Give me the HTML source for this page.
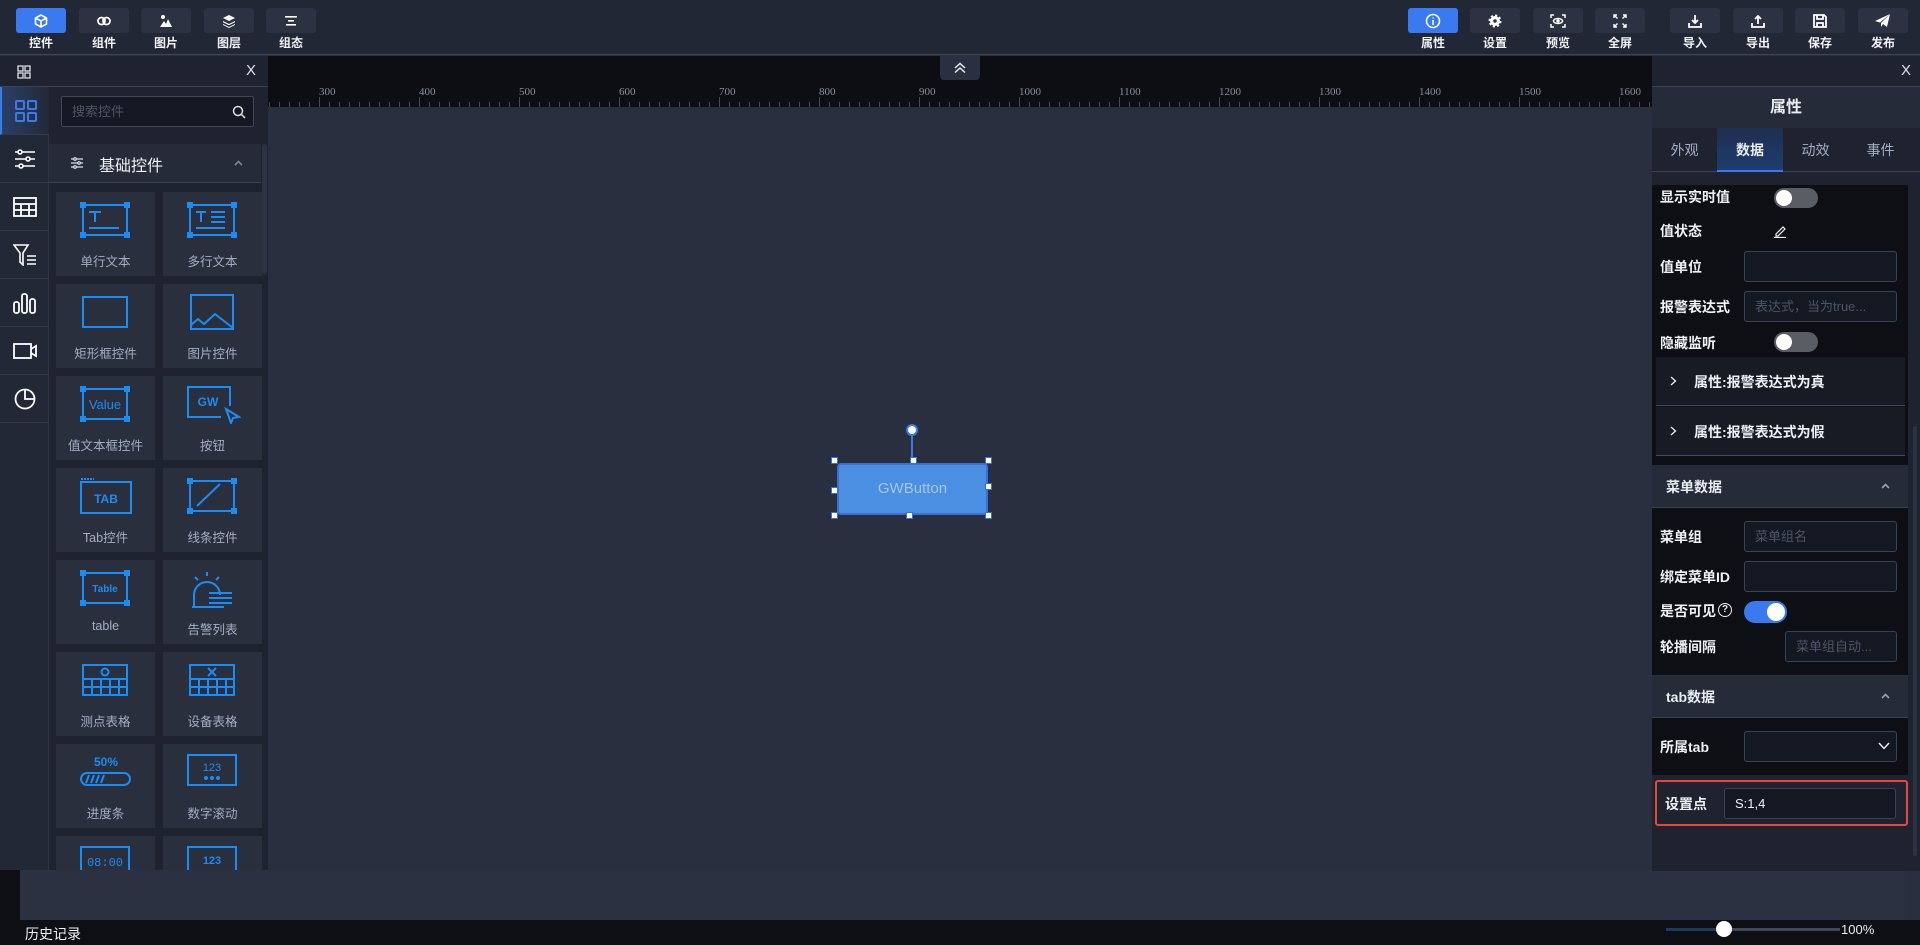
<!DOCTYPE html>
<html><head><meta charset="utf-8"><style>
*{box-sizing:border-box;margin:0;padding:0}
body{width:1920px;height:945px;overflow:hidden;background:#292f3e;font-family:"Liberation Sans","Noto Sans CJK SC",sans-serif;color:#e8ecf3;position:relative;font-size:14px}
.abs{position:absolute}
#top{left:0;top:0;width:1920px;height:55px;background:#222736;border-bottom:1px solid #3d4558}
.tb{position:absolute;top:8px;width:50px;height:25px;background:#2c3242;border-radius:3px;display:flex;align-items:center;justify-content:center}
.tb.on{background:#3a7af0}
.tl{position:absolute;top:34px;width:50px;text-align:center;font-size:12px;font-weight:bold;color:#f0f2f6}
#ruler{left:268px;top:56px;width:1384px;height:51px;background:#0c0e13;overflow:hidden}
.rl{position:absolute;top:30px;font-family:"Liberation Serif",serif;font-size:11px;color:#8a8f9a}
#lp{left:0;top:56px;width:268px;height:814px;background:#1f2330}
.side{position:absolute;left:0;width:49px;height:48px;border-bottom:1px solid #333a4b;display:flex;align-items:center;justify-content:center}
.card{position:absolute;width:99px;height:84px;background:#2a2f3e}
.card .lb{position:absolute;top:59px;width:100%;text-align:center;font-size:12.5px;color:#a3aec2}
.card svg{position:absolute;left:24px;top:10px}
#rp{left:1652px;top:56px;width:268px;height:815px;background:#1f2330}
.dk{position:absolute;left:0;width:256px;background:#0d0f14}
.lab{position:absolute;font-size:14px;font-weight:bold;color:#eef1f5}
.inp{position:absolute;height:31px;border:1px solid #3a4356;border-radius:3px;background:#141822;font-size:13px;color:#4d5567;padding:0 10px;line-height:29px}
.tg{position:absolute;width:44px;height:20px;border-radius:10px;background:#5a5d63}
.tg::after{content:"";position:absolute;left:2px;top:2px;width:16px;height:16px;border-radius:50%;background:#fff}
.sh{position:absolute;left:0;width:256px;height:43px;background:#262b3a;border-bottom:1px solid #3a4356}
.sh span{position:absolute;left:14px;top:12px;font-weight:bold;font-size:14px}
</style></head><body>
<div id="top" class="abs"></div>
<div class="tb on" style="left:16px"><svg width="14" height="14" viewBox="0 0 14 14" fill="none" stroke="#fff" stroke-width="1.6"><path d="M7 1L12.5 4V10L7 13L1.5 10V4Z M1.5 4L7 7L12.5 4 M7 7V13"/></svg></div><div class="tl" style="left:16px">控件</div>
<div class="tb" style="left:79px"><svg width="16" height="10" viewBox="0 0 16 10" fill="none" stroke="#fff" stroke-width="1.8"><circle cx="5.5" cy="5" r="3.5"/><circle cx="10.5" cy="5" r="3.5"/></svg></div><div class="tl" style="left:79px">组件</div>
<div class="tb" style="left:141px"><svg width="14" height="14" viewBox="0 0 14 14" fill="#fff"><circle cx="4" cy="3" r="2"/><path d="M1 13L5 7L7 10L9 5L13 13Z"/></svg></div><div class="tl" style="left:141px">图片</div>
<div class="tb" style="left:204px"><svg width="14" height="14" viewBox="0 0 14 14" fill="#fff"><path d="M7 1L13 4L7 7L1 4Z"/><path d="M1 7L7 10L13 7V8.2L7 11.2L1 8.2Z"/><path d="M1 10L7 13L13 10V11L7 14L1 11Z"/></svg></div><div class="tl" style="left:204px">图层</div>
<div class="tb" style="left:266px"><svg width="12" height="10" viewBox="0 0 12 10" fill="#fff"><rect x="0" y="0" width="12" height="1.6"/><rect x="3" y="4" width="6" height="1.6"/><rect x="1" y="8" width="10" height="1.6"/></svg></div><div class="tl" style="left:266px">组态</div>
<div class="tb on" style="left:1408px"><svg width="16" height="16" viewBox="0 0 16 16" fill="none" stroke="#fff" stroke-width="1.6"><circle cx="8" cy="8" r="6.5"/><path d="M8 7V12M8 4.5V5.5"/></svg></div><div class="tl" style="left:1408px">属性</div>
<div class="tb" style="left:1470px"><svg width="14" height="14" viewBox="0 0 14 14"><circle cx="7" cy="7" r="5" fill="#fff" stroke="#fff" stroke-width="3" stroke-dasharray="2 1.9"/><circle cx="7" cy="7" r="1.8" fill="#2c3242"/></svg></div><div class="tl" style="left:1470px">设置</div>
<div class="tb" style="left:1533px"><svg width="16" height="14" viewBox="0 0 16 14" fill="none" stroke="#fff" stroke-width="1.5"><path d="M1 4V1H4M12 1H15V4M15 10V13H12M4 13H1V10"/><ellipse cx="8" cy="7" rx="4.5" ry="2.5"/><circle cx="8" cy="7" r="1" fill="#fff"/></svg></div><div class="tl" style="left:1533px">预览</div>
<div class="tb" style="left:1595px"><svg width="14" height="14" viewBox="0 0 14 14" fill="none" stroke="#fff" stroke-width="1.4"><path d="M1 4V1H4M1 1L4.5 4.5M10 1H13V4M13 1L9.5 4.5M13 10V13H10M13 13L9.5 9.5M4 13H1V10M1 13L4.5 9.5"/></svg></div><div class="tl" style="left:1595px">全屏</div>
<div class="tb" style="left:1670px"><svg width="14" height="14" viewBox="0 0 14 14" fill="none" stroke="#fff" stroke-width="1.8"><path d="M7 1V9M4 6L7 9L10 6M1 9V13H13V9"/></svg></div><div class="tl" style="left:1670px">导入</div>
<div class="tb" style="left:1733px"><svg width="14" height="14" viewBox="0 0 14 14" fill="none" stroke="#fff" stroke-width="1.8"><path d="M7 10V2M4 5L7 2L10 5M1 9V13H13V9"/></svg></div><div class="tl" style="left:1733px">导出</div>
<div class="tb" style="left:1795px"><svg width="14" height="14" viewBox="0 0 14 14" fill="none" stroke="#fff" stroke-width="1.8"><path d="M1 1H11L13 3V13H1Z"/><path d="M4 1V5H10V1M4 13V9H10V13"/></svg></div><div class="tl" style="left:1795px">保存</div>
<div class="tb" style="left:1858px"><svg width="16" height="14" viewBox="0 0 16 14" fill="#fff"><path d="M15 0L0 7L5 8.5Z"/><path d="M15 0L6 9V13L8 10L12 13Z"/></svg></div><div class="tl" style="left:1858px">发布</div>

<div id="ruler" class="abs">
<svg width="1384" height="51" style="position:absolute;left:0;top:0"><g stroke="#444a56" stroke-width="1" id="tk"></g></svg>
<div id="rls"></div>
</div>
<div class="abs" style="left:940px;top:55px;width:40px;height:25px;background:#2a3040;border-radius:0 0 4px 4px;display:flex;justify-content:center;align-items:center"><svg width="14" height="12" viewBox="0 0 14 12" fill="none" stroke="#e8ecf3" stroke-width="1.5"><path d="M2 6L7 1.5L12 6M2 10.5L7 6L12 10.5"/></svg></div>

<div class="abs" style="left:911px;top:434px;width:2px;height:29px;background:#3a78ec"></div>
<div class="abs" style="left:906px;top:424px;width:12px;height:12px;border-radius:50%;background:#fff;border:2px solid #3a78ec"></div>
<div class="abs" style="left:837px;top:463px;width:151px;height:52px;background:#4a8fe2;border:2px solid #3a6fd8;border-radius:4px;color:#a6c5ee;font-size:15px;text-align:center;line-height:48px">GWButton</div>
<div class="abs" style="left:832px;top:458px;width:5px;height:5px;background:#fff;outline:1.5px solid #3a6fd8"></div>
<div class="abs" style="left:911px;top:458px;width:5px;height:5px;background:#fff;outline:1.5px solid #3a6fd8"></div>
<div class="abs" style="left:986px;top:458px;width:5px;height:5px;background:#fff;outline:1.5px solid #3a6fd8"></div>
<div class="abs" style="left:832px;top:488px;width:5px;height:5px;background:#fff;outline:1.5px solid #3a6fd8"></div>
<div class="abs" style="left:986px;top:484px;width:5px;height:5px;background:#fff;outline:1.5px solid #3a6fd8"></div>
<div class="abs" style="left:832px;top:513px;width:5px;height:5px;background:#fff;outline:1.5px solid #3a6fd8"></div>
<div class="abs" style="left:907px;top:513px;width:5px;height:5px;background:#fff;outline:1.5px solid #3a6fd8"></div>
<div class="abs" style="left:986px;top:513px;width:5px;height:5px;background:#fff;outline:1.5px solid #3a6fd8"></div>

<div class="abs" style="left:20px;top:870px;width:1885px;height:50px;background:#2b3141"></div>
<div class="abs" style="left:0;top:870px;width:20px;height:75px;background:#0d0f14"></div>
<div class="abs" style="left:0;top:920px;width:1920px;height:25px;background:#0d0f14"></div>
<div class="abs" style="left:25px;top:924px;font-size:14px;color:#eef1f5">历史记录</div>
<div class="abs" style="left:1666px;top:928px;width:58px;height:3px;background:#1d3a5a"></div>
<div class="abs" style="left:1724px;top:928px;width:116px;height:3px;background:#3f4759"></div>
<div class="abs" style="left:1716px;top:921px;width:16px;height:16px;border-radius:50%;background:#fff"></div>
<div class="abs" style="left:1841px;top:922px;font-size:13px;color:#e8ecf3">100%</div>

<div id="lp" class="abs">
<div class="abs" style="left:0;top:0;width:268px;height:31px;border-bottom:1px solid #3a4356"></div>
<svg class="abs" style="left:17px;top:9px" width="14" height="14" viewBox="0 0 14 14" fill="none" stroke="#dde2ea" stroke-width="1.3"><rect x="1" y="1" width="5" height="5"/><rect x="8" y="1" width="5" height="5"/><rect x="1" y="8" width="5" height="5"/><rect x="8" y="8" width="5" height="5"/></svg>
<div class="abs" style="left:246px;top:6px;font-size:15px;color:#dde2ea">X</div>
<div class="abs" style="left:0;top:31px;width:49px;height:783px;background:#232837;border-right:1px solid #2e3444"></div>
<div class="side" style="top:31px;border-left:2px solid #3a7af0;background:linear-gradient(90deg,#2a4068,#232837)"><svg width="22" height="22" viewBox="0 0 22 22" fill="none" stroke="#3a7af0" stroke-width="2"><rect x="1" y="1" width="8" height="8" rx="1"/><rect x="13" y="1" width="8" height="8" rx="1"/><rect x="1" y="13" width="8" height="8" rx="1"/><rect x="13" y="13" width="8" height="8" rx="1"/></svg></div>
<div class="side" style="top:79px"><svg width="22" height="20" viewBox="0 0 22 20" fill="none" stroke="#fff" stroke-width="1.6"><path d="M1 3H21M1 10H21M1 17H21"/><circle cx="6" cy="3" r="2" fill="#232837"/><circle cx="14" cy="10" r="2" fill="#232837"/><circle cx="7" cy="17" r="2" fill="#232837"/></svg></div>
<div class="side" style="top:127px"><svg width="24" height="20" viewBox="0 0 24 20" fill="none" stroke="#fff" stroke-width="1.8"><rect x="1" y="1" width="22" height="18"/><path d="M1 7H23M1 13H23M8 7V19M16 7V19"/></svg></div>
<div class="side" style="top:175px"><svg width="24" height="22" viewBox="0 0 24 22" fill="none" stroke="#fff" stroke-width="1.6"><path d="M1 1H15L10 9V21L7 18V9Z"/><path d="M14 12H23M14 16H23M14 20H23"/></svg></div>
<div class="side" style="top:223px"><svg width="24" height="22" viewBox="0 0 24 22" fill="none" stroke="#fff" stroke-width="1.8"><rect x="1" y="10" width="5" height="11" rx="2"/><rect x="9" y="2" width="5" height="19" rx="2"/><rect x="17" y="7" width="5" height="14" rx="2"/></svg></div>
<div class="side" style="top:271px"><svg width="24" height="16" viewBox="0 0 24 16" fill="none" stroke="#fff" stroke-width="1.8"><rect x="1" y="1" width="17" height="14"/><path d="M18 6L23 3V13L18 10"/></svg></div>
<div class="side" style="top:319px"><svg width="22" height="22" viewBox="0 0 22 22" fill="none" stroke="#fff" stroke-width="1.8"><circle cx="11" cy="11" r="9.5"/><path d="M11 1.5V11H20.5"/></svg></div>
<div class="abs" style="left:61px;top:40px;width:193px;height:31px;border:1px solid #3e4658;border-radius:2px;background:#141822;font-size:13px;color:#4d5567;padding-left:10px;line-height:29px">搜索控件</div>
<svg class="abs" style="left:232px;top:49px" width="14" height="14" viewBox="0 0 14 14" fill="none" stroke="#dde2ea" stroke-width="1.5"><circle cx="6" cy="6" r="4.5"/><path d="M9.5 9.5L13 13"/></svg>
<div class="abs" style="left:49px;top:88px;width:212px;height:39px;background:#262b3a;border-bottom:1px solid #3a4356"></div>
<svg class="abs" style="left:71px;top:101px" width="12" height="12" viewBox="0 0 12 12" fill="none" stroke="#dde2ea" stroke-width="1.2"><path d="M0 2H12M0 6H12M0 10H12"/><circle cx="4" cy="2" r="1.3" fill="#262b3a"/><circle cx="8" cy="6" r="1.3" fill="#262b3a"/><circle cx="4" cy="10" r="1.3" fill="#262b3a"/></svg>
<div class="abs" style="left:99px;top:96px;font-size:16px;color:#eef1f5">基础控件</div>
<svg class="abs" style="left:234px;top:104px" width="9" height="6" viewBox="0 0 9 6" fill="none" stroke="#7c8596" stroke-width="1.6"><path d="M1 5L4.5 1.5L8 5"/></svg>
<div class="abs" style="left:262px;top:88px;width:5px;height:130px;background:#2c3242;border-radius:3px"></div>
</div>

<div class="card abs" style="left:56px;top:192px"><svg width="50" height="36" viewBox="0 0 50 36" fill="none" stroke="#1a8cf5" stroke-width="2"><rect x="3" y="3" width="44" height="30"/><rect x="0" y="0" width="5" height="5" fill="#1a8cf5"/><rect x="45" y="0" width="5" height="5" fill="#1a8cf5"/><rect x="0" y="31" width="5" height="5" fill="#1a8cf5"/><rect x="45" y="31" width="5" height="5" fill="#1a8cf5"/><path d="M9 10H21M15 10V20M9 26H39"/></svg><div class="lb">单行文本</div></div>
<div class="card abs" style="left:163px;top:192px"><svg width="50" height="36" viewBox="0 0 50 36" fill="none" stroke="#1a8cf5" stroke-width="2"><rect x="3" y="3" width="44" height="30"/><rect x="0" y="0" width="5" height="5" fill="#1a8cf5"/><rect x="45" y="0" width="5" height="5" fill="#1a8cf5"/><rect x="0" y="31" width="5" height="5" fill="#1a8cf5"/><rect x="45" y="31" width="5" height="5" fill="#1a8cf5"/><path d="M9 10H19M14 10V20M24 10H38M24 15H38M24 20H38M9 26H38"/></svg><div class="lb">多行文本</div></div>
<div class="card abs" style="left:56px;top:284px"><svg width="50" height="36" viewBox="0 0 50 36" fill="none" stroke="#1a8cf5" stroke-width="2"><rect x="3" y="3" width="44" height="30"/></svg><div class="lb">矩形框控件</div></div>
<div class="card abs" style="left:163px;top:284px"><svg width="50" height="36" viewBox="0 0 50 36" fill="none" stroke="#1a8cf5" stroke-width="2"><rect x="4" y="1" width="42" height="34"/><path d="M4 31L11 25L17 30L28 20L46 34"/></svg><div class="lb">图片控件</div></div>
<div class="card abs" style="left:56px;top:376px"><svg width="50" height="36" viewBox="0 0 50 36" fill="none" stroke="#1a8cf5" stroke-width="2"><rect x="3" y="3" width="44" height="30"/><rect x="0" y="0" width="5" height="5" fill="#1a8cf5"/><rect x="45" y="0" width="5" height="5" fill="#1a8cf5"/><rect x="0" y="31" width="5" height="5" fill="#1a8cf5"/><rect x="45" y="31" width="5" height="5" fill="#1a8cf5"/><text x="25" y="23" text-anchor="middle" fill="#1a8cf5" stroke="none" font-size="13" font-family="Liberation Sans">Value</text></svg><div class="lb">值文本框控件</div></div>
<div class="card abs" style="left:163px;top:376px"><svg width="54" height="38" viewBox="0 0 54 38" fill="none" stroke="#1a8cf5" stroke-width="2"><path d="M43 20V1H1V31H34"/><path d="M39 23L52 31L46 32L44 37Z"/><text x="21" y="20" text-anchor="middle" fill="#1a8cf5" stroke="none" font-size="12" font-weight="bold" font-family="Liberation Sans">GW</text></svg><div class="lb">按钮</div></div>
<div class="card abs" style="left:56px;top:468px"><svg width="52" height="36" viewBox="0 0 52 36" fill="none" stroke="#1a8cf5" stroke-width="2"><path d="M1 1H14" stroke-dasharray="2 1"/><rect x="1" y="4" width="50" height="31"/><text x="26" y="25" text-anchor="middle" fill="#1a8cf5" stroke="none" font-size="12" font-weight="bold" font-family="Liberation Sans">TAB</text></svg><div class="lb">Tab控件</div></div>
<div class="card abs" style="left:163px;top:468px"><svg width="50" height="36" viewBox="0 0 50 36" fill="none" stroke="#1a8cf5" stroke-width="2"><rect x="3" y="3" width="44" height="30"/><rect x="0" y="0" width="5" height="5" fill="#1a8cf5"/><rect x="45" y="0" width="5" height="5" fill="#1a8cf5"/><rect x="0" y="31" width="5" height="5" fill="#1a8cf5"/><rect x="45" y="31" width="5" height="5" fill="#1a8cf5"/><path d="M10 28L33 6"/></svg><div class="lb">线条控件</div></div>
<div class="card abs" style="left:56px;top:560px"><svg width="50" height="36" viewBox="0 0 50 36" fill="none" stroke="#1a8cf5" stroke-width="2"><rect x="3" y="3" width="44" height="30"/><rect x="0" y="0" width="5" height="5" fill="#1a8cf5"/><rect x="45" y="0" width="5" height="5" fill="#1a8cf5"/><rect x="0" y="31" width="5" height="5" fill="#1a8cf5"/><rect x="45" y="31" width="5" height="5" fill="#1a8cf5"/><text x="25" y="22" text-anchor="middle" fill="#1a8cf5" stroke="none" font-size="10" font-weight="bold" font-family="Liberation Sans">Table</text></svg><div class="lb">table</div></div>
<div class="card abs" style="left:163px;top:560px"><svg width="50" height="40" viewBox="0 0 50 40" fill="none" stroke="#1a8cf5" stroke-width="2"><path d="M7 37V25A13 13 0 0 1 33 25M20 2V6M8 7L11 10M32 7L29 10M5 37H37M22 23H45M22 28H45M22 33H45"/></svg><div class="lb">告警列表</div></div>
<div class="card abs" style="left:56px;top:652px"><svg width="50" height="36" viewBox="0 0 50 36" fill="none" stroke="#1a8cf5" stroke-width="2"><rect x="3" y="3" width="44" height="30"/><path d="M3 17H47M3 25H47M12 17V33M21 17V33M30 17V33M39 17V33"/><circle cx="25" cy="10" r="3.5"/></svg><div class="lb">测点表格</div></div>
<div class="card abs" style="left:163px;top:652px"><svg width="50" height="36" viewBox="0 0 50 36" fill="none" stroke="#1a8cf5" stroke-width="2"><rect x="3" y="3" width="44" height="30"/><path d="M3 17H47M3 25H47M12 17V33M21 17V33M30 17V33M39 17V33M21 6L29 14M29 6L21 14"/></svg><div class="lb">设备表格</div></div>
<div class="card abs" style="left:56px;top:744px"><svg width="52" height="36" viewBox="0 0 52 36" fill="none" stroke="#1a8cf5" stroke-width="2"><text x="26" y="12" text-anchor="middle" fill="#1a8cf5" stroke="none" font-size="12" font-weight="bold" font-family="Liberation Sans">50%</text><rect x="1" y="19" width="49" height="12" rx="6"/><path d="M6 29L9 21M11 29L14 21M16 29L19 21M21 29L24 21"/></svg><div class="lb">进度条</div></div>
<div class="card abs" style="left:163px;top:744px"><svg width="50" height="36" viewBox="0 0 50 36" fill="none" stroke="#1a8cf5" stroke-width="2"><rect x="1" y="1" width="48" height="30"/><text x="25" y="17" text-anchor="middle" fill="#1a8cf5" stroke="none" font-size="11" font-family="Liberation Sans">123</text><circle cx="19" cy="24" r="1" fill="#1a8cf5"/><circle cx="25" cy="24" r="1" fill="#1a8cf5"/><circle cx="31" cy="24" r="1" fill="#1a8cf5"/></svg><div class="lb">数字滚动</div></div>
<div class="abs" style="left:56px;top:836px;width:99px;height:34px;background:#2a2f3e;overflow:hidden"><svg style="position:absolute;left:24px;top:10px" width="50" height="30" fill="none" stroke="#1a8cf5" stroke-width="2"><rect x="1" y="1" width="48" height="30"/><text x="25" y="20" text-anchor="middle" fill="#1a8cf5" stroke="none" font-size="12" font-family="Liberation Mono">08:00</text></svg></div>
<div class="abs" style="left:163px;top:836px;width:99px;height:34px;background:#2a2f3e;overflow:hidden"><svg style="position:absolute;left:24px;top:10px" width="50" height="30" fill="none" stroke="#1a8cf5" stroke-width="2"><rect x="1" y="1" width="48" height="30"/><text x="25" y="18" text-anchor="middle" fill="#1a8cf5" stroke="none" font-size="11" font-weight="bold" font-family="Liberation Sans">123</text></svg></div>

<div id="rp" class="abs">
<div class="abs" style="left:0;top:0;width:268px;height:31px;border-bottom:1px solid #3a4356"></div>
<div class="abs" style="left:249px;top:6px;font-size:15px;color:#dde2ea">X</div>
<div class="abs" style="left:0;top:31px;width:268px;height:41px;background:#262b3a;text-align:center;line-height:41px;font-size:16px;font-weight:bold">属性</div>
<div class="abs" style="left:0;top:72px;width:268px;height:44px;background:#1f2330;border-bottom:1px solid #3a4356"></div>
<div class="abs" style="left:0;top:72px;width:65px;height:44px;text-align:center;line-height:44px;color:#a3aec2">外观</div>
<div class="abs" style="left:65px;top:72px;width:66px;height:44px;text-align:center;line-height:44px;font-weight:bold;background:linear-gradient(#1f2f4e,#1d3c70);border-bottom:2px solid #3a7af0">数据</div>
<div class="abs" style="left:131px;top:72px;width:65px;height:44px;text-align:center;line-height:44px;color:#a3aec2">动效</div>
<div class="abs" style="left:196px;top:72px;width:65px;height:44px;text-align:center;line-height:44px;color:#a3aec2">事件</div>
<div class="abs" style="left:261px;top:370px;width:4px;height:430px;background:#2c3242;border-radius:3px"></div>

<div class="dk" style="top:129px;height:280px"></div>
<div class="lab" style="left:8px;top:131px">显示实时值</div><div class="tg" style="left:122px;top:132px"></div>
<div class="lab" style="left:8px;top:165px">值状态</div>
<svg class="abs" style="left:121px;top:168px" width="14" height="14" viewBox="0 0 14 14" fill="none" stroke="#eef1f5" stroke-width="1.2"><path d="M3 10L10 3L12 5L5 12H3Z M1 13.5H13"/></svg>
<div class="lab" style="left:8px;top:201px">值单位</div><div class="inp" style="left:92px;top:195px;width:153px"></div>
<div class="lab" style="left:8px;top:241px">报警表达式</div><div class="inp" style="left:92px;top:235px;width:153px">表达式，当为true...</div>
<div class="lab" style="left:8px;top:277px">隐藏监听</div><div class="tg" style="left:122px;top:276px"></div>
<div class="abs" style="left:4px;top:301px;width:249px;height:49px;background:#181b24;border-bottom:1px solid #3a4a6a"></div>
<div class="abs" style="left:4px;top:351px;width:249px;height:49px;background:#181b24;border-bottom:1px solid #3a4a6a"></div>
<svg class="abs" style="left:18px;top:320px" width="7" height="10" viewBox="0 0 7 10" fill="none" stroke="#eef1f5" stroke-width="1.3"><path d="M1 1L5.5 5L1 9"/></svg><div class="lab" style="left:42px;top:316px">属性:报警表达式为真</div>
<svg class="abs" style="left:18px;top:370px" width="7" height="10" viewBox="0 0 7 10" fill="none" stroke="#eef1f5" stroke-width="1.3"><path d="M1 1L5.5 5L1 9"/></svg><div class="lab" style="left:42px;top:366px">属性:报警表达式为假</div>

<div class="sh" style="top:409px"><span>菜单数据</span><svg class="abs" style="left:229px;top:18px" width="9" height="6" viewBox="0 0 9 6" fill="none" stroke="#9aa3b3" stroke-width="1.6"><path d="M1 5L4.5 1.5L8 5"/></svg></div>
<div class="dk" style="top:452px;height:167px"></div>
<div class="lab" style="left:8px;top:471px">菜单组</div><div class="inp" style="left:92px;top:465px;width:153px">菜单组名</div>
<div class="lab" style="left:8px;top:511px">绑定菜单ID</div><div class="inp" style="left:92px;top:505px;width:153px"></div>
<div class="lab" style="left:8px;top:545px">是否可见</div>
<div class="abs" style="left:66px;top:547px;width:14px;height:14px;border:1.3px solid #eef1f5;border-radius:50%;font-size:10px;line-height:12px;text-align:center;font-weight:bold">?</div>
<div class="abs" style="left:92px;top:545px;width:43px;height:22px;border-radius:11px;background:#3a7af0"></div><div class="abs" style="left:115px;top:547px;width:18px;height:18px;border-radius:50%;background:#fff"></div>
<div class="lab" style="left:8px;top:581px">轮播间隔</div><div class="inp" style="left:133px;top:575px;width:112px">菜单组自动...</div>
<div class="sh" style="top:619px"><span>tab数据</span><svg class="abs" style="left:229px;top:18px" width="9" height="6" viewBox="0 0 9 6" fill="none" stroke="#9aa3b3" stroke-width="1.6"><path d="M1 5L4.5 1.5L8 5"/></svg></div>
<div class="dk" style="top:662px;height:57px"></div>
<div class="lab" style="left:8px;top:681px">所属tab</div><div class="inp" style="left:92px;top:675px;width:153px"></div>
<svg class="abs" style="left:226px;top:686px" width="12" height="8" viewBox="0 0 12 8" fill="none" stroke="#eef1f5" stroke-width="1.4"><path d="M1 1L6 6.5L11 1"/></svg>
<div class="abs" style="left:3px;top:724px;width:253px;height:46px;border:2px solid #e8463c;border-radius:3px"></div>
<div class="lab" style="left:13px;top:738px">设置点</div>
<div class="inp" style="left:72px;top:732px;width:172px;color:#eef1f5;background:#141822">S:1,4</div>
</div>
<script>
var g=document.getElementById('tk'),s='';
for(var x=1;x<1384;x+=10){var big=((x-51)%100==0);s+='<line x1="'+x+'.5" y1="'+(big?41:46)+'" x2="'+x+'.5" y2="51"/>';}
g.innerHTML=s;
var r='';for(var v=300;v<=1600;v+=100){r+='<div class="rl" style="left:'+(v-249)+'px">'+v+'</div>';}
document.getElementById('rls').innerHTML=r;
</script>
</body></html>
